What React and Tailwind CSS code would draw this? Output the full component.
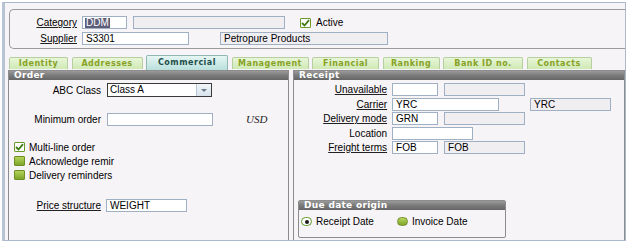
import React from "react";

const FONT = { fontFamily: '"Liberation Sans", Arial, sans-serif' };
const TAB_FONT = { fontFamily: '"DejaVu Sans", Verdana, sans-serif' };

function Input({ w, value = "", ro = false, className = "" }) {
  return (
    <div
      className={`h-[13px] border border-[#9fb0c4] px-[3px] text-[10px] leading-[11px] text-black whitespace-nowrap overflow-hidden ${
        ro ? "bg-[#f1eef2]" : "bg-white"
      } ${className}`}
      style={{ width: w }}
    >
      {value}
    </div>
  );
}

function Label({ children, w, link = true, className = "" }) {
  return (
    <div
      className={`text-right text-[10px] leading-[11px] text-black whitespace-nowrap ${className}`}
      style={{ width: w }}
    >
      <span className={link ? "underline decoration-[#222] underline-offset-[1px]" : ""}>{children}</span>
    </div>
  );
}

function Check({ checked }) {
  return (
    <div
      className={`w-[11px] h-[10px] rounded-[1px] border flex items-center justify-center ${
        checked
          ? "border-[#6a9a2a] bg-white"
          : "border-[#6f8f23] bg-gradient-to-b from-[#b4d35a] to-[#7fa52a]"
      }`}
    >
      {checked && (
        <svg width="9" height="8" viewBox="0 0 9 8">
          <path d="M1 4 L3.5 6.5 L8 1.2" stroke="#3f7a12" strokeWidth="1.8" fill="none" />
        </svg>
      )}
    </div>
  );
}

function Radio({ checked }) {
  return (
    <div
      className={`w-[11px] h-[9px] rounded-full border flex items-center justify-center ${
        checked
          ? "border-[#5f9a2a] bg-white"
          : "border-[#6f8f23] bg-gradient-to-b from-[#b8d65e] to-[#7fa52a]"
      }`}
    >
      {checked && <div className="w-[4px] h-[4px] rounded-full bg-[#1a1a1a]" />}
    </div>
  );
}

function TitleBar({ children, className = "" }) {
  return (
    <div
      className={`h-[9px] bg-gradient-to-b from-[#9a9a9a] via-[#7a7a7a] to-[#666] text-white font-bold text-[9px] leading-[9px] pl-[5px] tracking-[0.3px] ${className}`}
      style={TAB_FONT}
    >
      {children}
    </div>
  );
}

const tabs = [
  { name: "Identity", w: 59 },
  { name: "Addresses", w: 71 },
  { name: "Commercial", w: 82, active: true },
  { name: "Management", w: 77 },
  { name: "Financial", w: 67 },
  { name: "Ranking", w: 57 },
  { name: "Bank ID no.", w: 80 },
  { name: "Contacts", w: 65 },
];

export default function App() {
  return (
    <div className="w-[634px] h-[243px] bg-white overflow-hidden" style={FONT}>
      <div className="ml-[2px] mt-[2px] w-[624px] h-[239px] border border-[#aab9cc] border-l-[3px] border-l-[#b8c4d4] bg-[#f7f4f7] flex flex-col">
        {/* header */}
        <div className="ml-[4px] mt-[6px] h-[40px] border border-r-0 border-[#9a9a9a] rounded-l-[5px] flex flex-col gap-[3px] pt-[6px]">
          <div className="flex items-center">
            <Label w={67}>Category</Label>
            <div className="ml-[5px] h-[13px] w-[45px] border border-[#9fb0c4] bg-white px-[2px] flex items-center">
              <span className="bg-[#5d5d7a] text-white text-[10px] leading-[10px] px-[1px]">DDM</span>
            </div>
            <Input w={152} ro className="ml-[6px]" />
            <div className="ml-[15px]"><Check checked /></div>
            <span className="ml-[5px] text-[10px] leading-[11px]">Active</span>
          </div>
          <div className="flex items-center">
            <Label w={67}>Supplier</Label>
            <Input w={107} value="S3301" className="ml-[5px]" />
            <Input w={168} value="Petropure Products" ro className="ml-[31px]" />
          </div>
        </div>

        {/* tabs */}
        <div className="mt-[6px] ml-[4px] flex items-end gap-[3.5px] h-[15px]">
          {tabs.map((t) => (
            <div
              key={t.name}
              className={`flex items-center justify-center font-bold text-[8px] tracking-[0.5px] border border-b-0 rounded-t-[2px] ${
                t.active
                  ? "h-[15px] bg-gradient-to-b from-[#e6f6f4] to-[#b9e0dc] border-[#8fb8b4] text-[#1d4e4a]"
                  : "h-[12px] mb-[1px] bg-gradient-to-b from-[#e8f6d8] to-[#cfe9b4] border-[#b6cfa0] text-[#88a226]"
              }`}
              style={{ ...TAB_FONT, width: t.w }}
            >
              {t.name}
            </div>
          ))}
        </div>

        {/* panels */}
        <div className="ml-[3px] flex gap-[4px] flex-1 min-h-0">
          {/* Order */}
          <div className="w-[282px] border border-b-0 border-[#8c8c8c] flex flex-col">
            <TitleBar>Order</TitleBar>
            <div className="flex flex-col pt-[3px]">
              <div className="flex items-center">
                <Label w={92} link={false}>ABC Class</Label>
                <div className="ml-[6px] h-[14px] w-[105px] border border-[#3a3a3a] bg-white flex">
                  <div className="flex-1 text-[10px] leading-[12px] px-[2px]">Class A</div>
                  <div className="w-[15px] border-l border-[#b9c6d4] bg-gradient-to-b from-[#f2f6fa] to-[#d8e2ec] flex items-center justify-center">
                    <div className="w-0 h-0 border-l-[3px] border-r-[3px] border-t-[3px] border-l-transparent border-r-transparent border-t-[#6c7c8c]" />
                  </div>
                </div>
              </div>
              <div className="flex items-center mt-[16px]">
                <Label w={92} link={false}>Minimum order</Label>
                <Input w={106} className="ml-[6px]" />
                <span className="ml-[33px] italic text-[11px] leading-[11px] text-[#222]" style={{ fontFamily: '"Liberation Serif", "Times New Roman", serif' }}>
                  USD
                </span>
              </div>
              <div className="flex flex-col gap-[2px] mt-[15px] pl-[5px]">
                {[
                  ["Multi-line order", true],
                  ["Acknowledge remir", false],
                  ["Delivery reminders", false],
                ].map(([l, c]) => (
                  <div key={l} className="flex items-center gap-[4px] h-[12px]">
                    <Check checked={c} />
                    <span className="text-[10px] leading-[11px]">{l}</span>
                  </div>
                ))}
              </div>
              <div className="flex items-center mt-[18px]">
                <Label w={92}>Price structure</Label>
                <Input w={81} value="WEIGHT" className="ml-[5px]" />
              </div>
            </div>
          </div>

          {/* Receipt */}
          <div className="w-[333px] border border-b-0 border-[#8c8c8c] flex flex-col">
            <TitleBar>Receipt</TitleBar>
            <div className="flex flex-col gap-[1.5px] pt-[3px]">
              <div className="flex items-center h-[13px]">
                <Label w={93}>Unavailable</Label>
                <Input w={46} className="ml-[5px]" />
                <Input w={81} ro className="ml-[6px]" />
              </div>
              <div className="flex items-center h-[13px]">
                <Label w={93}>Carrier</Label>
                <Input w={107} value="YRC" className="ml-[5px]" />
                <Input w={81} value="YRC" ro className="ml-[31px]" />
              </div>
              <div className="flex items-center h-[13px]">
                <Label w={93}>Delivery mode</Label>
                <Input w={46} value="GRN" className="ml-[5px]" />
                <Input w={81} ro className="ml-[6px]" />
              </div>
              <div className="flex items-center h-[13px]">
                <Label w={93} link={false}>Location</Label>
                <Input w={81} className="ml-[5px]" />
              </div>
              <div className="flex items-center h-[13px]">
                <Label w={93}>Freight terms</Label>
                <Input w={46} value="FOB" className="ml-[5px]" />
                <Input w={81} value="FOB" ro className="ml-[6px]" />
              </div>
            </div>
            <div className="mt-[46px] ml-[4px] w-[208px] h-[38px] border border-[#8c8c8c] rounded-[2px] flex flex-col">
              <TitleBar>Due date origin</TitleBar>
              <div className="flex items-center mt-[6px] pl-[2px]">
                <Radio checked />
                <span className="ml-[4px] text-[10px] leading-[11px]">Receipt Date</span>
                <div className="ml-[23px]"><Radio /></div>
                <span className="ml-[4px] text-[10px] leading-[11px]">Invoice Date</span>
              </div>
            </div>
          </div>
        </div>
      </div>
    </div>
  );
}
